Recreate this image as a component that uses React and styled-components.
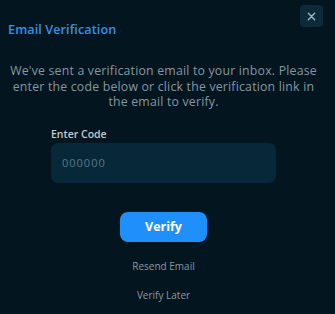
import React from 'react';
import styled, { createGlobalStyle } from 'styled-components';

const Global = createGlobalStyle`
  html, body {
    margin: 0;
    padding: 0;
    background: #03151f;
  }
  * { box-sizing: border-box; }
`

const Modal = styled.div`
  width: 335px;
  height: 314px;
  background: #03151f;
  font-family: "Open Sans", "Noto Sans", sans-serif;
  display: flex;
  flex-direction: column;
`

const Header = styled.div`
  display: flex;
  justify-content: space-between;
  align-items: flex-start;
  padding: 5px 12px 0 8px;
`

const Title = styled.h2`
  margin: 16px 0 0 0;
  font-size: 12.6px;
  line-height: 18px;
  font-weight: 600;
  color: #3c8fe0;
  letter-spacing: 0.1px;
`

const CloseButton = styled.button`
  width: 23px;
  height: 22px;
  border: none;
  border-radius: 4px;
  background: #0c2a38;
  color: #9fb4c0;
  display: flex;
  align-items: center;
  justify-content: center;
  padding: 0;
  cursor: pointer;
`

const Body = styled.div`
  display: flex;
  flex-direction: column;
  align-items: center;
  padding: 0 8px 0 0;
`

const Message = styled.p`
  margin: 24px 0 0 0;
  font-size: 12.3px;
  line-height: 15.5px;
  letter-spacing: 0.2px;
  color: #8797a1;
  text-align: center;
`

const Field = styled.div`
  width: 225px;
  margin-top: 17px;
  display: flex;
  flex-direction: column;
  gap: 2px;
`

const Label = styled.label`
  font-size: 10.5px;
  line-height: 14px;
  font-weight: 600;
  color: #c3cbd0;
`

const CodeInput = styled.input`
  width: 225px;
  height: 40px;
  border: none;
  outline: none;
  border-radius: 7px;
  background: #062838;
  padding: 0 11px;
  font-family: inherit;
  font-size: 11px;
  letter-spacing: 1px;
  color: #c3cbd0;
  &::placeholder { color: #5b7886; }
`

const VerifyButton = styled.button`
  margin-top: 29px;
  width: 87px;
  height: 30px;
  border: none;
  border-radius: 8px;
  background: #1f8ffc;
  color: #ffffff;
  font-family: inherit;
  font-size: 12.5px;
  font-weight: 700;
  cursor: pointer;
`

const LinkButton = styled.button`
  margin-top: ${p => p.$gap}px;
  border: none;
  background: none;
  padding: 0;
  font-family: inherit;
  font-size: 10px;
  line-height: 14px;
  color: #8a99a3;
  cursor: pointer;
`

export default function App() {
  return (
    <Modal>
      <Global />
      <Header>
        <Title>Email Verification</Title>
        <CloseButton aria-label="Close">
          <svg width="9" height="9" viewBox="0 0 10 10">
            <path d="M1.5 1.5 L8.5 8.5 M8.5 1.5 L1.5 8.5" stroke="currentColor" strokeWidth="1.6" strokeLinecap="round" />
          </svg>
        </CloseButton>
      </Header>
      <Body>
        <Message>
          We've sent a verification email to your inbox. Please<br />
          enter the code below or click the verification link in<br />
          the email to verify.
        </Message>
        <Field>
          <Label>Enter Code</Label>
          <CodeInput placeholder="000000" />
        </Field>
        <VerifyButton>Verify</VerifyButton>
        <LinkButton $gap={17}>Resend Email</LinkButton>
        <LinkButton $gap={15}>Verify Later</LinkButton>
      </Body>
    </Modal>
  );
}
